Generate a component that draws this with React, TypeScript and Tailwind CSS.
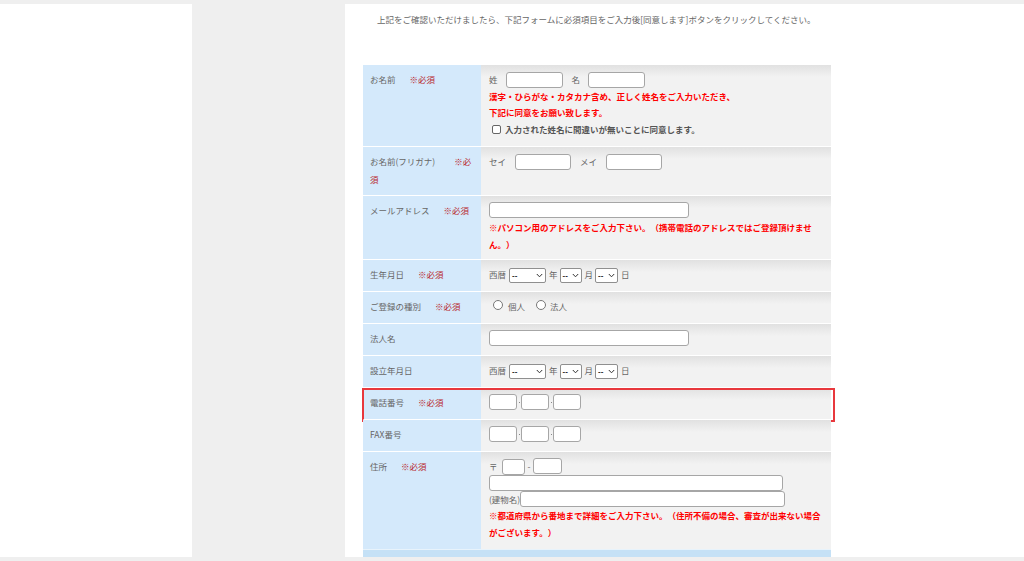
import React from "react";

const F = { fontFamily: '"Noto Sans CJK JP", "Noto Sans", sans-serif' };

function Inp({ w, h = 16 }: { w: number; h?: number }) {
  return (
    <span
      className="inline-block shrink-0 border border-[#a6a6a6] rounded-[3px] bg-white align-middle"
      style={{ width: w, height: h }}
    />
  );
}

function Sel({ w }: { w: number }) {
  return (
    <span
      className="inline-flex shrink-0 items-center justify-between border border-[#8f8f8f] rounded-[2px] bg-white h-[15px] pl-[2px] pr-[2px] text-[8px] leading-none text-[#222]"
      style={{ width: w, fontFamily: '"Liberation Sans", sans-serif' }}
    >
      <span className="font-bold tracking-[0px]">--</span>
      <svg width="7" height="5" viewBox="0 0 7 5">
        <path d="M0.8 1 L3.5 3.8 L6.2 1" fill="none" stroke="#333" strokeWidth="1" />
      </svg>
    </span>
  );
}

function Req() {
  return <span className="pl-[14px] text-[#b8282d]">※必須</span>;
}

function Row({
  label,
  h,
  children,
  extra,
}: {
  label: React.ReactNode;
  h: number;
  children: React.ReactNode;
  extra?: React.ReactNode;
}) {
  return (
    <div className="relative flex border-t border-white/60" style={{ height: h }}>
      <div className="w-[118px] shrink-0 bg-[#d4e9fb] pl-[7px] pr-[6px] pt-[5px] leading-[18px] text-[#666]">
        {label}
      </div>
      <div className="flex-1 bg-[linear-gradient(#e1e1e1,#f2f2f2_12px)] pl-[8px] pt-[5px] leading-[18px] text-[#666]">
        {children}
      </div>
      {extra}
    </div>
  );
}

function DateRow() {
  return (
    <div className="flex h-[18px] items-center">
      <span>西暦</span>
      <span className="ml-[3px]"><Sel w={37} /></span>
      <span className="ml-[3px]">年</span>
      <span className="ml-[2px]"><Sel w={22} /></span>
      <span className="ml-[3px]">月</span>
      <span className="ml-[2px]"><Sel w={23} /></span>
      <span className="ml-[3px]">日</span>
    </div>
  );
}

function Dash() {
  return <span className="mx-[1.5px] inline-block h-[1px] w-[1px] bg-[#888]" />;
}

function Tel() {
  return (
    <div className="flex h-[18px] items-center">
      <Inp w={28} h={16} />
      <Dash />
      <Inp w={28} h={16} />
      <Dash />
      <Inp w={28} h={16} />
    </div>
  );
}

function Radio() {
  return <span className="inline-block h-[10px] w-[10px] rounded-full border border-[#777] bg-white" />;
}

export default function App() {
  return (
    <div
      className="h-[561px] w-[1024px] overflow-hidden bg-[#efefef] pt-[4px] text-[8.5px] [text-spacing-trim:space-all]"
      style={F}
    >
      <div className="flex h-[553px]">
        <div className="w-[192px] bg-white" />
        <div className="w-[153px]" />
        <div className="flex-1 overflow-hidden bg-white pl-[18px]">
          <p className="pl-[14px] pt-[9px] leading-[12px] text-[#666]">
            上記をご確認いただけましたら、下記フォームに必須項目をご入力後[同意します]ボタンをクリックしてください。
          </p>
          <div className="mt-[39px] w-[468px]">
            <Row
              h={82}
              label={
                <>
                  お名前<Req />
                </>
              }
            >
              <div className="flex h-[18px] items-center">
                <span>姓</span>
                <span className="ml-[8px]"><Inp w={57} h={16} /></span>
                <span className="ml-[9px]">名</span>
                <span className="ml-[8px]"><Inp w={57} h={16} /></span>
              </div>
              <div className="font-bold leading-[16px] text-[#ff0000]">
                漢字・ひらがな・カタカナ含め、正しく姓名をご入力いただき、
                <br />
                下記に同意をお願い致します。
              </div>
              <div className="flex h-[18px] items-center font-bold text-[#555]">
                <span className="ml-[3px] mr-[4px] inline-block h-[9px] w-[9px] rounded-[2px] border border-[#666] bg-white" />
                入力された姓名に間違いが無いことに同意します。
              </div>
            </Row>
            <Row
              h={49}
              label={
                <>
                  お名前(フリガナ)<span className="pl-[19px] text-[#b8282d]">※必</span>
                  <br />
                  <span className="text-[#b8282d]">須</span>
                </>
              }
            >
              <div className="flex h-[18px] items-center">
                <span>セイ</span>
                <span className="ml-[9px]"><Inp w={56} h={16} /></span>
                <span className="ml-[9px]">メイ</span>
                <span className="ml-[9px]"><Inp w={56} h={16} /></span>
              </div>
            </Row>
            <Row
              h={64}
              label={
                <>
                  メールアドレス<Req />
                </>
              }
            >
              <div className="flex h-[18px] items-center">
                <Inp w={200} h={16} />
              </div>
              <div className="pr-[14px] font-bold leading-[16.5px] text-[#ff0000]">
                ※パソコン用のアドレスをご入力下さい。（携帯電話のアドレスではご登録頂けません。）
              </div>
            </Row>
            <Row
              h={32}
              label={
                <>
                  生年月日<Req />
                </>
              }
            >
              <DateRow />
            </Row>
            <Row
              h={32}
              label={
                <>
                  ご登録の種別<Req />
                </>
              }
            >
              <div className="flex h-[18px] items-center">
                <span className="ml-[4px]"><Radio /></span>
                <span className="ml-[5px]">個人</span>
                <span className="ml-[11px]"><Radio /></span>
                <span className="ml-[4px]">法人</span>
              </div>
            </Row>
            <Row h={32} label="法人名">
              <div className="flex h-[18px] items-center">
                <Inp w={200} h={16} />
              </div>
            </Row>
            <Row h={32} label="設立年月日">
              <DateRow />
            </Row>
            <Row
              h={32}
              label={
                <>
                  電話番号<Req />
                </>
              }
              extra={
                <div className="pointer-events-none absolute left-[-1px] top-[0px] h-[34px] w-[473px] border-2 border-[#e8383d]" />
              }
            >
              <Tel />
            </Row>
            <Row h={32} label="FAX番号">
              <Tel />
            </Row>
            <Row
              h={98}
              label={
                <>
                  住所<Req />
                </>
              }
            >
              <div className="flex h-[18px] items-center">
                <span>〒</span>
                <span className="ml-[4px]"><Inp w={23} h={16} /></span>
                <span className="mx-[3px]">-</span>
                <Inp w={29} h={16} />
              </div>
              <div className="flex h-[16px] items-center">
                <Inp w={294} h={16} />
              </div>
              <div className="flex h-[16px] items-center">
                <span>(建物名)</span>
                <Inp w={265} h={16} />
              </div>
              <div className="pr-[10px] font-bold leading-[17px] text-[#ff0000]">
                ※都道府県から番地まで詳細をご入力下さい。（住所不備の場合、審査が出来ない場合がございます。）
              </div>
            </Row>
            <div className="h-[10px] border-t border-white/60 bg-[#c5e1f6]" />
          </div>
        </div>
      </div>
    </div>
  );
}
